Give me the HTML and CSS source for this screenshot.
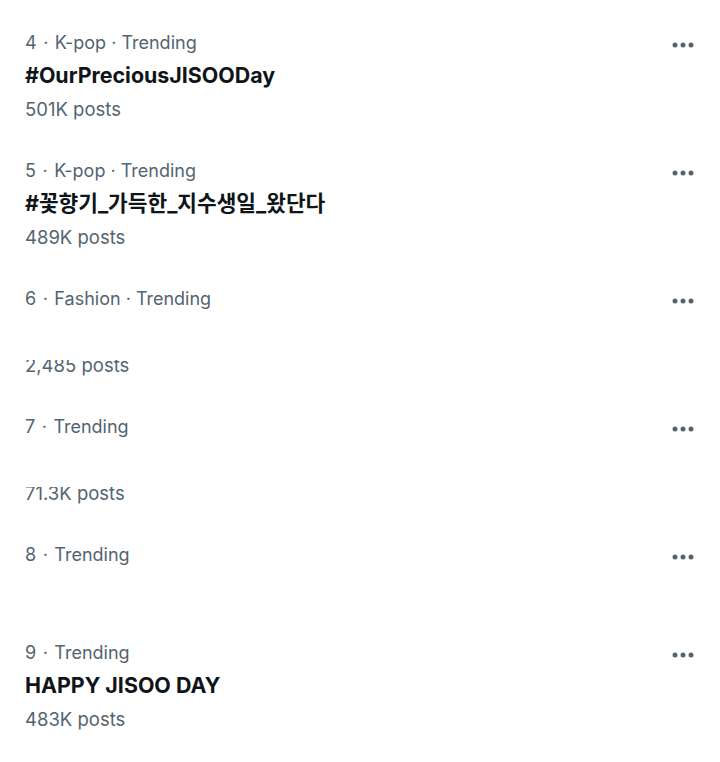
FILE: index.html
```html
<!DOCTYPE html>
<html>
<head>
<meta charset="utf-8">
<link rel="stylesheet" href="styles.css">
</head>
<body>
<div class="list">
  <div class="trend">
    <div class="info">
      <div class="meta">4<span class="sep">·</span>K-pop · Trending</div>
      <div class="title">#OurPreciousJISOODay</div>
      <div class="count">501K posts</div>
    </div>
    <button class="more" aria-label="More"><svg viewBox="0 0 24 12" width="24" height="12"><circle cx="4" cy="6" r="2.5"/><circle cx="12" cy="6" r="2.5"/><circle cx="20" cy="6" r="2.5"/></svg></button>
  </div>
  <div class="trend">
    <div class="info">
      <div class="meta">5<span class="sep">·</span>K-pop · Trending</div>
      <div class="title">#꽃향기_가득한_지수생일_왔단다</div>
      <div class="count">489K posts</div>
    </div>
    <button class="more" aria-label="More"><svg viewBox="0 0 24 12" width="24" height="12"><circle cx="4" cy="6" r="2.5"/><circle cx="12" cy="6" r="2.5"/><circle cx="20" cy="6" r="2.5"/></svg></button>
  </div>
  <div class="trend">
    <div class="info">
      <div class="meta">6<span class="sep">·</span>Fashion · Trending</div>
      <div class="title hidden">&nbsp;</div>
      <div class="count clip-6">2,485 posts</div>
    </div>
    <button class="more" aria-label="More"><svg viewBox="0 0 24 12" width="24" height="12"><circle cx="4" cy="6" r="2.5"/><circle cx="12" cy="6" r="2.5"/><circle cx="20" cy="6" r="2.5"/></svg></button>
  </div>
  <div class="trend">
    <div class="info">
      <div class="meta">7<span class="sep">·</span>Trending</div>
      <div class="title hidden">&nbsp;</div>
      <div class="count clip-7">71.3K posts</div>
    </div>
    <button class="more" aria-label="More"><svg viewBox="0 0 24 12" width="24" height="12"><circle cx="4" cy="6" r="2.5"/><circle cx="12" cy="6" r="2.5"/><circle cx="20" cy="6" r="2.5"/></svg></button>
  </div>
  <div class="trend short">
    <div class="info">
      <div class="meta">8<span class="sep">·</span>Trending</div>
      <div class="title hidden">&nbsp;</div>
    </div>
    <button class="more" aria-label="More"><svg viewBox="0 0 24 12" width="24" height="12"><circle cx="4" cy="6" r="2.5"/><circle cx="12" cy="6" r="2.5"/><circle cx="20" cy="6" r="2.5"/></svg></button>
  </div>
  <div class="trend">
    <div class="info">
      <div class="meta">9<span class="sep">·</span>Trending</div>
      <div class="title">HAPPY JISOO DAY</div>
      <div class="count">483K posts</div>
    </div>
    <button class="more" aria-label="More"><svg viewBox="0 0 24 12" width="24" height="12"><circle cx="4" cy="6" r="2.5"/><circle cx="12" cy="6" r="2.5"/><circle cx="20" cy="6" r="2.5"/></svg></button>
  </div>
</div>
</body>
</html>
```
FILE: styles.css
```css
html, body {
  margin: 0;
  padding: 0;
  background: #ffffff;
}
body {
  font-family: Inter, "Noto Sans CJK KR", sans-serif;
  -webkit-font-smoothing: antialiased;
}
.list {
  padding-top: 13px;
}
.trend {
  display: flex;
  align-items: flex-start;
  padding: 14px 25px 14px 25px;
}
.trend.short {
  padding-bottom: 20px;
}
.info {
  flex: 1;
  min-width: 0;
}
.meta {
  font-size: 18px;
  line-height: 32px;
  color: #536471;
}
.sep {
  margin: 0 6.5px;
}
.title {
  font-size: 21.4px;
  line-height: 32px;
  font-weight: 700;
  color: #0f1419;
}
.count {
  font-size: 18.5px;
  line-height: 36px;
  color: #536471;
}
.hidden {
  visibility: hidden;
}
.clip-6 {
  clip-path: inset(13px 0 0 0);
}
.clip-7 {
  clip-path: inset(12px 0 0 0);
}
.more {
  flex: none;
  width: 24px;
  height: 36px;
  padding: 0;
  border: 0;
  background: transparent;
  display: flex;
  align-items: center;
  justify-content: center;
  fill: #536471;
}
.more svg {
  display: block;
}
```
